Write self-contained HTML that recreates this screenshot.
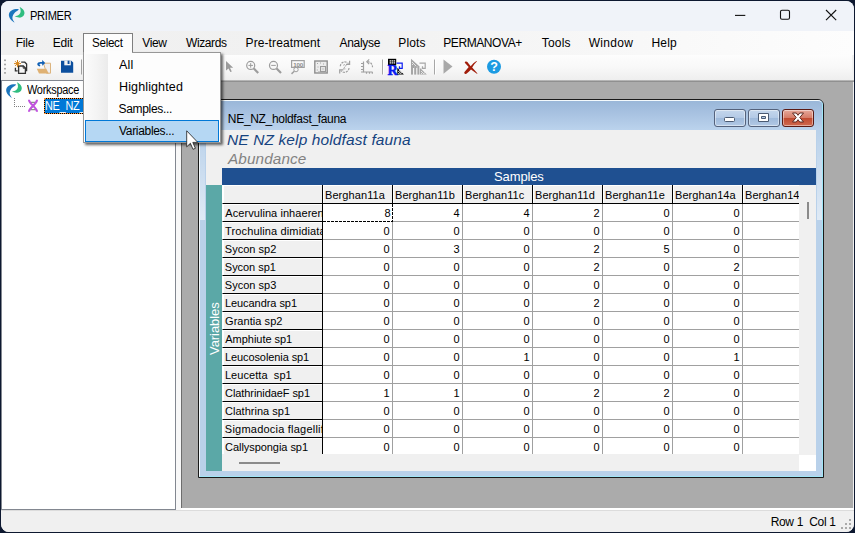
<!DOCTYPE html>
<html lang="en"><head><meta charset="utf-8"><title>PRIMER</title>
<style>
*{box-sizing:border-box;margin:0;padding:0}
html,body{width:855px;height:533px;overflow:hidden;background:#0d1830}
body{position:relative;font-family:"Liberation Sans",sans-serif;font-size:12px;color:#000}
.win,.win *{position:absolute}
.win{left:0;top:0;width:855px;height:533px;overflow:hidden}
.winbg{left:1px;top:1px;width:852.5px;height:530.5px;background:#f0f0f0;border-radius:8px}
.title{left:1px;top:1px;width:852.5px;height:30px;background:#f0f3f9;border-radius:8px 8px 0 0}
.t{white-space:nowrap;line-height:16px;height:16px}
.menubar{left:1px;top:31px;width:852.5px;height:24px;background:linear-gradient(90deg,#f0f0f0 0%,#f1f1f1 40%,#fdfdfd 100%)}
.toolbar{left:1px;top:55px;width:851px;height:25px;background:linear-gradient(180deg,#fdfdfd 0%,#f8f8f8 50%,#eeeeee 100%);border-radius:0 0 3px 0}
.tbline{left:1px;top:80px;width:852.5px;height:2px;background:linear-gradient(180deg,#c2c2c2,#8f8f8f)}
.tree{left:1px;top:80px;width:175px;height:429.500px;background:#fff;border:1px solid #828790}
.split{left:176px;top:82px;width:5px;height:428px;background:#f8f8f8}
.mdi{left:181px;top:81px;width:671.500px;height:427px;background:#ababab;border-left:1px solid #6d6d6d;border-top:1px solid #909090}
.stline{left:181px;top:508px;width:672.500px;height:2px;background:#fff}
.status{left:1px;top:510px;width:852.5px;height:21.500px;background:#f0f0f0;border-top:1px solid #dcdcdc;border-radius:0 0 8px 8px}
.dot{width:2px;height:2px;background:#a9a9a9}
/* child window */
.cw{left:198px;top:99px;width:626px;height:379px;background:#b9d1ea;border:1px solid #1a1a1a;border-radius:6px 6px 0 0;overflow:hidden}
.cwt{left:0;top:0;width:100%;height:30px;background:linear-gradient(180deg,#99b6d8 0%,#a8c2e1 45%,#bbd3ed 100%)}
.cwin{left:0;top:0;right:0;bottom:0;border:1px solid #f4fafd;border-right-color:#9fe6f7;border-bottom-color:#9fe6f7;border-radius:5px 5px 0 0}
.client{left:206px;top:130px;width:610px;height:341px;background:#f0f0f0}
.sbar{left:16px;top:38px;width:594px;height:17px;background:#1f5091;color:#fff}
.vbar{left:0;top:55px;width:16px;height:286px;background:#5ba8a7}
.grid{left:16px;top:55px;width:577px;height:269px;overflow:hidden;background:#fff}
.hc{top:0;height:19px;background:#f0f0f0;border-right:1px solid #000;border-bottom:1px solid #000;box-shadow:inset 1px 1px 0 #fff}
.hc span{left:2.000px;top:1.900px;white-space:nowrap;line-height:16px;font-size:11px;letter-spacing:0.080px}
.rl{left:0;width:101px;height:18px;background:#f0f0f0;border-left:1px solid #fff;border-right:1px solid #000;border-bottom:1px solid #000;overflow:hidden;box-shadow:inset 1px 1px 0 #fff}
.rl span{left:2.3px;top:1.100px;white-space:nowrap;line-height:16px;font-size:11px;letter-spacing:0.200px}
.dc{width:70px;height:18px;border-right:1px solid #a0a0a0;border-bottom:1px solid #a0a0a0;background:#fff}
.dc span{right:2.400px;top:1.100px;white-space:nowrap;line-height:16px;font-size:11px}
.dc.sel{border-right:none;border-bottom:none;background:repeating-linear-gradient(90deg,#000 0 3px,transparent 3px 4px) 0 100%/100% 1px no-repeat,repeating-linear-gradient(180deg,#000 0 3px,transparent 3px 4px) 100% 0/1px 100% no-repeat,#fff}
.corner{left:0;top:0;width:101px;height:19px;background:#f0f0f0;border-left:1px solid #fff;border-right:1px solid #000;border-bottom:1px solid #000;box-shadow:inset 1px 1px 0 #fff}
/* buttons */
.cb{top:109px;width:32px;height:18px;border:1px solid #54627c;border-radius:3px;background:linear-gradient(180deg,#c4d6ec 0%,#b4cae6 48%,#9fbadb 52%,#b2c9e5 100%);box-shadow:inset 0 0 0 1px rgba(255,255,255,.45)}
.cb.x{border-color:#5a1a14;background:linear-gradient(180deg,#e6a99b 0%,#d67c68 48%,#c14a30 52%,#cf6a50 100%)}
/* dropdown */
.dd{left:83px;top:52px;width:138px;height:91px;background:#fdfdfd;border:1px solid #979797;box-shadow:2px 2px 2.500px rgba(0,0,0,.6)}
.ddg{left:1px;top:1px;width:23px;height:66px;background:linear-gradient(90deg,#fbfbfb,#f4f4f4 50%,#ebebeb)}
.hl{left:1px;top:67px;width:134px;height:22px;background:#b5d7f3;border:1px solid #0078d7}
.seltab{left:83px;top:33px;width:50px;height:21px;background:#fdfdfd;border:1px solid #7f7f7f;border-bottom:none}

#t_primer{letter-spacing:-0.300px;margin-left:-1.28px;transform:scaleX(0.9244);transform-origin:0 0;margin-top:-0.40px;}
#m0{letter-spacing:-0.254px;margin-left:-1.25px;margin-top:-0.30px;}
#m1{letter-spacing:-0.181px;margin-left:-0.25px;margin-top:-0.30px;}
#m2{letter-spacing:-0.300px;margin-left:-0.28px;transform:scaleX(0.9691);transform-origin:0 0;margin-top:-0.30px;}
#m3{letter-spacing:-0.359px;margin-left:0.25px;margin-top:-0.30px;}
#m4{letter-spacing:-0.381px;margin-left:-0.05px;margin-top:-0.30px;}
#m5{letter-spacing:0.098px;margin-left:-0.45px;margin-top:-0.30px;}
#m6{letter-spacing:-0.311px;margin-left:0.50px;margin-top:-0.30px;}
#m7{letter-spacing:0.168px;margin-left:-0.75px;margin-top:-0.30px;}
#m8{letter-spacing:-0.421px;margin-left:-0.75px;margin-top:-0.30px;}
#m9{letter-spacing:0.209px;margin-left:-0.25px;margin-top:-0.30px;}
#m10{letter-spacing:0.287px;margin-left:0.75px;margin-top:-0.30px;}
#m11{letter-spacing:0.181px;margin-left:-0.55px;margin-top:-0.30px;}
#d0{letter-spacing:0.120px;margin-left:0.10px;transform:scaleX(1.0461);transform-origin:0 0;margin-top:0.00px;}
#d1{letter-spacing:0.120px;margin-left:-0.39px;transform:scaleX(1.0425);transform-origin:0 0;margin-top:0.00px;}
#d2{letter-spacing:-0.334px;margin-left:-0.40px;margin-top:0.00px;}
#d3{letter-spacing:-0.328px;margin-left:0.05px;margin-top:0.00px;}
#tw{letter-spacing:-0.300px;margin-left:-0.05px;transform:scaleX(0.9115);transform-origin:0 0;margin-top:-0.20px;}
#st{letter-spacing:-0.306px;margin-left:0.65px;margin-top:0.00px;}
#cwtitle{letter-spacing:-0.322px;margin-left:-0.15px;margin-top:-1.40px;}
#h1{letter-spacing:0.120px;margin-left:0.36px;transform:scaleX(1.0557);transform-origin:0 0;margin-top:-2.00px;}
#h2{letter-spacing:0.120px;margin-left:1.26px;transform:scaleX(1.0430);transform-origin:0 0;margin-top:-1.70px;}
#rl0{letter-spacing:0.063px;margin-left:0.00px;}
#rl1{letter-spacing:0.128px;margin-left:-0.20px;}
#rl2{letter-spacing:0.013px;margin-left:-0.45px;}
#rl3{letter-spacing:-0.050px;margin-left:-0.45px;}
#rl4{letter-spacing:0.007px;margin-left:-0.45px;}
#rl5{letter-spacing:-0.055px;margin-left:-0.40px;}
#rl6{letter-spacing:0.050px;margin-left:-0.25px;}
#rl7{letter-spacing:-0.031px;margin-left:0.00px;}
#rl8{letter-spacing:-0.087px;margin-left:-0.40px;}
#rl9{letter-spacing:0.064px;margin-left:-0.40px;}
#rl10{letter-spacing:-0.078px;margin-left:-0.25px;}
#rl11{letter-spacing:0.013px;margin-left:-0.25px;}
#rl12{letter-spacing:0.218px;margin-left:-0.45px;}
#rl13{letter-spacing:-0.054px;margin-left:-0.25px;}
#tn{letter-spacing:-0.300px;margin-left:-0.66px;transform:scaleX(0.9099);transform-origin:0 0;margin-top:-0.50px;}
#smp{letter-spacing:-0.144px;margin-left:0.09px;margin-top:0.80px;}
</style></head>
<body>
<div class="win">
  <div class="winbg"></div>
  <div class="title"></div>
  
  <span class="t" style="left:31px;top:8px" id="t_primer">PRIMER</span>
  <svg style="left:725px;top:0" width="128" height="31" viewBox="725 0 128 31"><g stroke="#111" stroke-width="1.100" fill="none"><path d="M735 15.400h10.300"/><rect x="780.500" y="10.300" width="9" height="9" rx="1.500"/><path d="M826 10l10.200 10.200M836.200 10l-10.200 10.200"/></g></svg>
  <div class="menubar"></div>
  <span class="t" style="left:17px;top:35px" id="m0">File</span>
  <span class="t" style="left:53px;top:35px" id="m1">Edit</span>
  <span class="t" style="left:142px;top:35px" id="m3">View</span>
  <span class="t" style="left:186px;top:35px" id="m4">Wizards</span>
  <span class="t" style="left:246px;top:35px" id="m5">Pre-treatment</span>
  <span class="t" style="left:339px;top:35px" id="m6">Analyse</span>
  <span class="t" style="left:399px;top:35px" id="m7">Plots</span>
  <span class="t" style="left:444px;top:35px" id="m8">PERMANOVA+</span>
  <span class="t" style="left:542px;top:35px" id="m9">Tools</span>
  <span class="t" style="left:588px;top:35px" id="m10">Window</span>
  <span class="t" style="left:652px;top:35px" id="m11">Help</span>
  <div class="toolbar"></div>
  <div class="tbline"></div>
  <svg style="left:0;top:55px" width="520" height="26" viewBox="0 55 520 26">
  <!-- grip -->
  <g fill="#a5a5a5"><rect x="4" y="59.500" width="2" height="1.600"/><rect x="4" y="63.700" width="2" height="1.600"/><rect x="4" y="67.900" width="2" height="1.600"/><rect x="4" y="72.100" width="2" height="1.600"/></g>
  <!-- new -->
  <g fill="none" stroke="#333" stroke-width="1.300" stroke-linejoin="miter">
    <path d="M21.200 62.200h3.600l1.800 1.800v6.600h-1.500"/>
    <path d="M15.400 67.800v3h2.200"/>
    <path d="M18.600 66h4.800l2 2v5.300h-6.800z" fill="#f6f6f6"/>
    <path d="M23.200 66v2.200h2.200" stroke-width="1"/>
  </g>
  <g stroke="#d9861a" stroke-width="1" stroke-linecap="butt"><path d="M17.500 60v7.200M14 63.600h7M15.100 61.200l4.800 4.800M19.900 61.200l-4.800 4.800"/></g>
  <!-- open -->
  <path d="M43.500 63.200h7v10h-4z" fill="#f0eeee" stroke="#dcb47e" stroke-width="1"/>
  <path d="M36.800 68.800h9.500l2.400 4.600h-9.700z" fill="#dfb173"/>
  <path d="M39.800 66.400c-1.800-.3-2.600-1.300-2.500-2.400.1-1.300 1.300-2 3.300-2h1.600v-1.900l3 2.800-3 2.800v-1.900h-1.600c-.9 0-1.200.2-1.200.5 0 .4.300.6 1 .7z" fill="#0f5fb5"/>
  <!-- save -->
  <path d="M61 60.700h10.300l1.900 1.900v10.200H61z" fill="#0c4f9e"/>
  <rect x="64.300" y="60.700" width="6.500" height="4.600" fill="#f3f3f3"/>
  <rect x="67.600" y="60.700" width="1.900" height="3.300" fill="#0c4f9e"/>
  <!-- sep0 (mostly hidden) -->
  <rect x="81" y="59.500" width="1" height="15" fill="#a0a0a0"/>
  <!-- pointer -->
  <path d="M226 61v9.600l2.500-2.200 1.800 3.700 1.500-.7-1.800-3.600h3.200z" fill="#9b9b9b"/>
  <!-- zoom in -->
  <g fill="none" stroke="#9c9c9c">
    <circle cx="250.700" cy="65.400" r="4" stroke-width="1.200"/>
    <path d="M253.800 68.500l4.400 4.500" stroke-width="2.200"/>
    <path d="M248.400 65.400h4.600M250.700 63.100v4.600" stroke-width="1"/>
    <circle cx="273.500" cy="65.400" r="4" stroke-width="1.200"/>
    <path d="M276.600 68.500l4.400 4.500" stroke-width="2.200"/>
    <path d="M271.200 65.400h4.600" stroke-width="1"/>
  </g>
  <!-- 100 -->
  <g fill="none" stroke="#a0a0a0">
    <rect x="291.600" y="60.600" width="12.600" height="6.800" stroke-width="1.200"/>
    <circle cx="296" cy="69.600" r="2.200" stroke-width="1"/>
    <path d="M294.300 71.300l-2.800 2.600" stroke-width="1.500"/>
  </g>
  <text x="293.200" y="66.500" font-family="Liberation Sans, sans-serif" font-size="6.200" font-weight="bold" fill="#8c8c8c" letter-spacing="-0.100" style="opacity:.99">100</text>
  <!-- dotted box -->
  <g>
    <rect x="314.800" y="61" width="12.400" height="12" fill="#ececec" stroke="#8f8f8f" stroke-width="1.400"/>
    <rect x="320.500" y="66.500" width="5" height="5" fill="#e4e4e4" stroke="#9a9a9a" stroke-width="1"/>
    <g fill="#a5a5a5"><rect x="317" y="63" width="1" height="1"/><rect x="320" y="62.500" width="1" height="1"/><rect x="323" y="63.500" width="1" height="1"/><rect x="317.500" y="66.500" width="1" height="1"/><rect x="316.800" y="69.500" width="1" height="1"/><rect x="318.500" y="71" width="1" height="1"/><rect x="322.500" y="68.500" width="1" height="1"/></g>
  </g>
  <!-- rotate -->
  <g fill="none" stroke="#a0a0a0" stroke-width="1.200">
    <path d="M340.300 66.200a4.600 4.600 0 0 1 8.200-2.600" stroke-dasharray="2.200 1"/>
    <path d="M349.600 60.800v3.600h-3.600"/>
    <path d="M349 68a4.600 4.600 0 0 1-8.200 2.600" stroke-dasharray="2.200 1"/>
    <path d="M339.700 73.400v-3.600h3.600"/>
    <path d="M343.300 65.300c.8-1 2.600-.8 2.600.4 0 1.200-2.400 1.600-2.600 3.200h2.800" stroke-width="1" stroke-dasharray="1.600 0.800"/>
  </g>
  <!-- axes -->
  <g fill="none" stroke="#a0a0a0" stroke-width="1.200">
    <path d="M363.500 61.500v10.500h9"/>
    <path d="M361 63.500h2.500M361 66.500h2.500M361 69.500h2.500M361 72h2.500M366.500 72v1.800M369.500 72v1.800M372.300 72v1.800"/>
    <path d="M367.500 61.700c3 0 5 2.500 5 5.500" stroke-dasharray="2.200 1"/>
    <path d="M369.200 59.300l-2.400 2.400 2.400 2.400"/>
  </g>
  <!-- sep1 -->
  <rect x="382" y="59.500" width="1" height="15" fill="#a7a7a7"/><rect x="383" y="59.500" width="1" height="15" fill="#fff"/>
  <!-- R icon -->
  <rect x="388" y="58.800" width="8.200" height="6.600" fill="#000"/>
  <g fill="#fff"><rect x="389.600" y="60.300" width="1.500" height="1.200"/><rect x="391.600" y="60.300" width="1.500" height="1.200"/><rect x="393.600" y="60.300" width="1.500" height="1.200"/><rect x="389.600" y="62.300" width="1.500" height="1.200"/><rect x="391.600" y="62.300" width="1.500" height="1.200"/><rect x="393.600" y="62.300" width="1.500" height="1.200"/></g>
  <path d="M396.500 63.200h5.700v5.200h-3.500M399.500 66.200v2.200" fill="none" stroke="#0a1cf0" stroke-width="1.200"/>
  <text x="387.600" y="74.600" font-family="Liberation Serif, serif" font-size="14" font-weight="bold" fill="#0a1cf0" stroke="#0a1cf0" stroke-width="0.500" textLength="10.400" lengthAdjust="spacingAndGlyphs">R</text>
  <path d="M397.300 67.800v6.800h6.600z" fill="#000"/>
  <g fill="#fff"><rect x="398.300" y="71" width="1" height="1"/><rect x="399.300" y="72" width="1" height="1"/><rect x="398.300" y="73" width="1" height="1"/><rect x="400.300" y="73" width="1" height="1"/><rect x="399.300" y="70" width="1" height="1"/><rect x="400.300" y="71" width="1" height="1"/><rect x="401.300" y="72" width="1" height="1"/></g>
  <!-- gray icon -->
  <g fill="#a6a6a6">
    <path d="M411 58.800v7.200h8z"/>
    <rect x="411" y="66" width="2" height="8.600"/><rect x="414.200" y="66" width="2" height="8.600"/><rect x="417.400" y="66" width="2" height="8.600"/>
    <rect x="413" y="66" width="1.200" height="2"/><rect x="416.200" y="66" width="1.200" height="2"/>
    <path d="M420 68v6.600h6.800z"/>
  </g>
  <path d="M419.500 63.200h5.700v5.200h-3.500M422.500 66.200v2.200" fill="none" stroke="#a6a6a6" stroke-width="1.200"/>
  <g fill="#e6e6e6"><rect x="412" y="62" width="1" height="1"/><rect x="413" y="63" width="1" height="1"/><rect x="412" y="64" width="1" height="1"/><rect x="414" y="64" width="1" height="1"/><rect x="415" y="65" width="1" height="1"/><rect x="421" y="71" width="1" height="1"/><rect x="422" y="72" width="1" height="1"/><rect x="421" y="73" width="1" height="1"/><rect x="423" y="73" width="1" height="1"/><rect x="424" y="72.500" width="1" height="1"/></g>
  <!-- sep2 -->
  <rect x="434" y="59.500" width="1" height="15" fill="#a7a7a7"/><rect x="435" y="59.500" width="1" height="15" fill="#fff"/>
  <!-- play -->
  <path d="M443.500 59.500l9 7-9 7.200z" fill="#a9a9a9"/>
  <!-- red x -->
  <path d="M465.200 61.800c.8-.6 1.700-.4 2.200.300l3.300 4.100c1.700-2 3.500-3.700 5.700-5.100.4-.2.700.1.400.5-1.800 1.800-3.300 3.800-4.600 6l5.100 5.600c.3.400 0 .7-.4.500l-5.900-4.200c-1.500 1.600-2.900 3.100-4.600 4.200-1.300.8-2.800-.4-1.900-1.700l4.200-5.100-3.700-4c-.4-.4-.3-.8.200-1.100z" fill="#a11d0a"/>
  <!-- help -->
  <circle cx="494" cy="66.800" r="7" fill="#1c9be2"/>
  <text x="494" y="71.300" text-anchor="middle" font-family="Liberation Sans, sans-serif" font-size="12.500" font-weight="bold" fill="#fff">?</text>
</svg>

  <div class="tree"></div>
  <svg style="left:0;top:0" width="40" height="120" viewBox="0 0 40 120"><g><path d="M18.800 9.200C14.500 8.600 9 10.500 8.850 14.800c-.05 3.200 2.650 6.200 5.750 7.800-1.600-2.100-2.600-3.800-2.100-5.800.5-2.600 2.300-4.600 4.500-5.800.8-.6 1.500-1.100 1.800-1.800Z" fill="#1b75bd"/><path d="M19.600 7c2.900 1.200 5.400 3.800 4.800 6.800-.6 2.800-2.900 4.100-5.400 3.800-1.700-.2-3.200-.6-4.400-1.300 1.900-.1 3.400-.7 4.600-1.700 2-1.800 1.800-4.800.4-7.600Z" fill="#2fbd80"/></g><g transform="translate(-2.700 75.200)"><path d="M18.800 9.200C14.500 8.600 9 10.500 8.850 14.800c-.05 3.200 2.650 6.200 5.750 7.800-1.600-2.100-2.600-3.800-2.100-5.800.5-2.600 2.300-4.600 4.500-5.800.8-.6 1.500-1.100 1.800-1.800Z" fill="#1b75bd"/><path d="M19.600 7c2.900 1.200 5.400 3.800 4.800 6.800-.6 2.800-2.900 4.100-5.400 3.800-1.700-.2-3.200-.6-4.400-1.300 1.900-.1 3.400-.7 4.600-1.700 2-1.800 1.800-4.800.4-7.600Z" fill="#2fbd80"/></g></svg>
  <svg style="left:0;top:95px" width="60" height="22" viewBox="0 95 60 22">
  <path d="M14.500 98v8.500" stroke="#808080" stroke-width="1" stroke-dasharray="1 1" fill="none"/>
  <path d="M14 106.500h11" stroke="#808080" stroke-width="1" stroke-dasharray="1 1" fill="none"/>
  <g fill="none" stroke="#8f8f8f" stroke-width="1.300"><path d="M30 102.400h6.200L30.200 109.600h6"/></g>
  <g fill="none" stroke="#c152df" stroke-width="2.100"><path d="M29 99.800c0 4.700 8 7.200 8 12M37 99.800c0 4.700-8 7.200-8 12"/></g>
</svg>
  <span class="t" style="left:27px;top:82px" id="tw">Workspace</span>
  <div style="left:44px;top:98px;width:60px;height:16px;background:#0078d7;border:1px solid #000"></div><div style="left:44px;top:98px;width:60px;height:16px;border:1px dotted #ff9030"></div>
  <span class="t" style="left:46px;top:98px;color:#fff" id="tn">NE_NZ_</span>
  <div class="split"></div>
  <div class="mdi"></div>
  <div class="stline"></div>
  <div class="status"></div>
  <span class="t" style="left:770px;top:514px" id="st">Row 1&nbsp; Col 1</span>
  <i class="dot" style="left:849px;top:519px"></i>
  <i class="dot" style="left:845px;top:523px"></i><i class="dot" style="left:849px;top:523px"></i>
  <i class="dot" style="left:841px;top:527px"></i><i class="dot" style="left:845px;top:527px"></i><i class="dot" style="left:849px;top:527px"></i>
  <div class="cw">
    <div class="cwt"></div>
    <div class="cwin"></div>
  </div>
  <div style="left:200px;top:130px;width:5px;height:90px;background:linear-gradient(180deg,rgba(255,255,255,0),rgba(255,255,255,.55))"></div>
  <div style="left:817px;top:130px;width:5px;height:90px;background:linear-gradient(180deg,rgba(255,255,255,0),rgba(255,255,255,.55))"></div>
  <span class="t" style="left:228px;top:112px" id="cwtitle">NE_NZ_holdfast_fauna</span>
  <div class="cb" style="left:714px"></div>
  <div class="cb" style="left:748px"></div>
  <div class="cb x" style="left:782px"></div>
  <svg style="left:714px;top:108px" width="102" height="20" viewBox="714 108 102 20">
  <rect x="724.500" y="117.500" width="10" height="4" rx="1" fill="#fff" stroke="#4a5a72" stroke-width="1"/>
  <path d="M758.500 113.500h10v8h-10zM761.500 116.500v2h4v-2z" fill="#fff" fill-rule="evenodd" stroke="#4a5a72" stroke-width="1"/>
  <path d="M792.500 113h3.800l1.700 2.300 1.700-2.300h3.800l-3.700 4.500 3.700 4.500h-3.800l-1.700-2.300-1.700 2.300h-3.800l3.700-4.500z" fill="#fff" stroke="#5e2a22" stroke-width="1" stroke-linejoin="round"/>
</svg>
  <div class="client">
    <span class="t" style="left:21px;top:2px;font-size:14.670px;font-style:italic;color:#15437f;line-height:20px;height:20px" id="h1">NE NZ kelp holdfast fauna</span>
    <span class="t" style="left:21px;top:21px;font-size:14.670px;font-style:italic;color:#828282;line-height:20px;height:20px" id="h2">Abundance</span>
    <div class="sbar"><span class="t" style="left:272px;top:0;font-size:13px;color:#fff" id="smp">Samples</span></div>
    <div class="vbar"></div>
    <div style="left:593px;top:325px;width:17px;height:16px;background:#fff"></div>
    <div style="left:601px;top:72px;width:2px;height:17px;background:#8b8b8b"></div>
    <div style="left:33px;top:332px;width:41px;height:2px;background:#8b8b8b"></div>
    <div class="grid">
      <div class="corner"></div>
      <div class="hc" style="left:101px;width:70px"><span id="hc0">Berghan11a</span></div>
<div class="hc" style="left:171px;width:70px"><span id="hc1">Berghan11b</span></div>
<div class="hc" style="left:241px;width:70px"><span id="hc2">Berghan11c</span></div>
<div class="hc" style="left:311px;width:70px"><span id="hc3">Berghan11d</span></div>
<div class="hc" style="left:381px;width:70px"><span id="hc4">Berghan11e</span></div>
<div class="hc" style="left:451px;width:70px"><span id="hc5">Berghan14a</span></div>
<div class="hc" style="left:521px;width:70px"><span id="hc6">Berghan14</span></div>
<div class="rl" style="top:19px"><span id="rl0">Acervulina inhaeren</span></div>
<div class="dc sel" style="top:19px;left:101px"><span>8</span></div>
<div class="dc" style="top:19px;left:171px"><span>4</span></div>
<div class="dc" style="top:19px;left:241px"><span>4</span></div>
<div class="dc" style="top:19px;left:311px"><span>2</span></div>
<div class="dc" style="top:19px;left:381px"><span>0</span></div>
<div class="dc" style="top:19px;left:451px"><span>0</span></div>
<div class="dc" style="top:19px;left:521px"></div>
<div class="rl" style="top:37px"><span id="rl1">Trochulina dimidiata</span></div>
<div class="dc" style="top:37px;left:101px"><span>0</span></div>
<div class="dc" style="top:37px;left:171px"><span>0</span></div>
<div class="dc" style="top:37px;left:241px"><span>0</span></div>
<div class="dc" style="top:37px;left:311px"><span>0</span></div>
<div class="dc" style="top:37px;left:381px"><span>0</span></div>
<div class="dc" style="top:37px;left:451px"><span>0</span></div>
<div class="dc" style="top:37px;left:521px"></div>
<div class="rl" style="top:55px"><span id="rl2">Sycon sp2</span></div>
<div class="dc" style="top:55px;left:101px"><span>0</span></div>
<div class="dc" style="top:55px;left:171px"><span>3</span></div>
<div class="dc" style="top:55px;left:241px"><span>0</span></div>
<div class="dc" style="top:55px;left:311px"><span>2</span></div>
<div class="dc" style="top:55px;left:381px"><span>5</span></div>
<div class="dc" style="top:55px;left:451px"><span>0</span></div>
<div class="dc" style="top:55px;left:521px"></div>
<div class="rl" style="top:73px"><span id="rl3">Sycon sp1</span></div>
<div class="dc" style="top:73px;left:101px"><span>0</span></div>
<div class="dc" style="top:73px;left:171px"><span>0</span></div>
<div class="dc" style="top:73px;left:241px"><span>0</span></div>
<div class="dc" style="top:73px;left:311px"><span>2</span></div>
<div class="dc" style="top:73px;left:381px"><span>0</span></div>
<div class="dc" style="top:73px;left:451px"><span>2</span></div>
<div class="dc" style="top:73px;left:521px"></div>
<div class="rl" style="top:91px"><span id="rl4">Sycon sp3</span></div>
<div class="dc" style="top:91px;left:101px"><span>0</span></div>
<div class="dc" style="top:91px;left:171px"><span>0</span></div>
<div class="dc" style="top:91px;left:241px"><span>0</span></div>
<div class="dc" style="top:91px;left:311px"><span>0</span></div>
<div class="dc" style="top:91px;left:381px"><span>0</span></div>
<div class="dc" style="top:91px;left:451px"><span>0</span></div>
<div class="dc" style="top:91px;left:521px"></div>
<div class="rl" style="top:109px"><span id="rl5">Leucandra sp1</span></div>
<div class="dc" style="top:109px;left:101px"><span>0</span></div>
<div class="dc" style="top:109px;left:171px"><span>0</span></div>
<div class="dc" style="top:109px;left:241px"><span>0</span></div>
<div class="dc" style="top:109px;left:311px"><span>2</span></div>
<div class="dc" style="top:109px;left:381px"><span>0</span></div>
<div class="dc" style="top:109px;left:451px"><span>0</span></div>
<div class="dc" style="top:109px;left:521px"></div>
<div class="rl" style="top:127px"><span id="rl6">Grantia sp2</span></div>
<div class="dc" style="top:127px;left:101px"><span>0</span></div>
<div class="dc" style="top:127px;left:171px"><span>0</span></div>
<div class="dc" style="top:127px;left:241px"><span>0</span></div>
<div class="dc" style="top:127px;left:311px"><span>0</span></div>
<div class="dc" style="top:127px;left:381px"><span>0</span></div>
<div class="dc" style="top:127px;left:451px"><span>0</span></div>
<div class="dc" style="top:127px;left:521px"></div>
<div class="rl" style="top:145px"><span id="rl7">Amphiute sp1</span></div>
<div class="dc" style="top:145px;left:101px"><span>0</span></div>
<div class="dc" style="top:145px;left:171px"><span>0</span></div>
<div class="dc" style="top:145px;left:241px"><span>0</span></div>
<div class="dc" style="top:145px;left:311px"><span>0</span></div>
<div class="dc" style="top:145px;left:381px"><span>0</span></div>
<div class="dc" style="top:145px;left:451px"><span>0</span></div>
<div class="dc" style="top:145px;left:521px"></div>
<div class="rl" style="top:163px"><span id="rl8">Leucosolenia sp1</span></div>
<div class="dc" style="top:163px;left:101px"><span>0</span></div>
<div class="dc" style="top:163px;left:171px"><span>0</span></div>
<div class="dc" style="top:163px;left:241px"><span>1</span></div>
<div class="dc" style="top:163px;left:311px"><span>0</span></div>
<div class="dc" style="top:163px;left:381px"><span>0</span></div>
<div class="dc" style="top:163px;left:451px"><span>1</span></div>
<div class="dc" style="top:163px;left:521px"></div>
<div class="rl" style="top:181px"><span id="rl9">Leucetta&nbsp; sp1</span></div>
<div class="dc" style="top:181px;left:101px"><span>0</span></div>
<div class="dc" style="top:181px;left:171px"><span>0</span></div>
<div class="dc" style="top:181px;left:241px"><span>0</span></div>
<div class="dc" style="top:181px;left:311px"><span>0</span></div>
<div class="dc" style="top:181px;left:381px"><span>0</span></div>
<div class="dc" style="top:181px;left:451px"><span>0</span></div>
<div class="dc" style="top:181px;left:521px"></div>
<div class="rl" style="top:199px"><span id="rl10">ClathrinidaeF sp1</span></div>
<div class="dc" style="top:199px;left:101px"><span>1</span></div>
<div class="dc" style="top:199px;left:171px"><span>1</span></div>
<div class="dc" style="top:199px;left:241px"><span>0</span></div>
<div class="dc" style="top:199px;left:311px"><span>2</span></div>
<div class="dc" style="top:199px;left:381px"><span>2</span></div>
<div class="dc" style="top:199px;left:451px"><span>0</span></div>
<div class="dc" style="top:199px;left:521px"></div>
<div class="rl" style="top:217px"><span id="rl11">Clathrina sp1</span></div>
<div class="dc" style="top:217px;left:101px"><span>0</span></div>
<div class="dc" style="top:217px;left:171px"><span>0</span></div>
<div class="dc" style="top:217px;left:241px"><span>0</span></div>
<div class="dc" style="top:217px;left:311px"><span>0</span></div>
<div class="dc" style="top:217px;left:381px"><span>0</span></div>
<div class="dc" style="top:217px;left:451px"><span>0</span></div>
<div class="dc" style="top:217px;left:521px"></div>
<div class="rl" style="top:235px"><span id="rl12">Sigmadocia flagellif</span></div>
<div class="dc" style="top:235px;left:101px"><span>0</span></div>
<div class="dc" style="top:235px;left:171px"><span>0</span></div>
<div class="dc" style="top:235px;left:241px"><span>0</span></div>
<div class="dc" style="top:235px;left:311px"><span>0</span></div>
<div class="dc" style="top:235px;left:381px"><span>0</span></div>
<div class="dc" style="top:235px;left:451px"><span>0</span></div>
<div class="dc" style="top:235px;left:521px"></div>
<div class="rl" style="top:253px"><span id="rl13">Callyspongia sp1</span></div>
<div class="dc" style="top:253px;left:101px"><span>0</span></div>
<div class="dc" style="top:253px;left:171px"><span>0</span></div>
<div class="dc" style="top:253px;left:241px"><span>0</span></div>
<div class="dc" style="top:253px;left:311px"><span>0</span></div>
<div class="dc" style="top:253px;left:381px"><span>0</span></div>
<div class="dc" style="top:253px;left:451px"><span>0</span></div>
<div class="dc" style="top:253px;left:521px"></div>
    </div>
  </div>
  <span class="t" style="left:206.600px;top:355.400px;font-size:13px;color:#fff;transform:rotate(-90deg);transform-origin:0 0;letter-spacing:-0.060px" id="var">Variables</span>
  <div class="seltab"></div>
  <div class="dd">
    <div class="ddg"></div>
    <div class="hl"></div>
  </div>
  <div style="left:84px;top:51px;width:48px;height:2px;background:#fdfdfd"></div>
  <span class="t" style="left:92px;top:35px" id="m2">Select</span>
  <span class="t" style="left:119px;top:57px" id="d0">All</span>
  <span class="t" style="left:119px;top:79px" id="d1">Highlighted</span>
  <span class="t" style="left:119px;top:101px" id="d2">Samples...</span>
  <span class="t" style="left:119px;top:123px" id="d3">Variables...</span>
  <svg style="left:185.500px;top:130px" width="14" height="22" viewBox="0 0 14 22"><path d="M0.700 0.800V16.800L4.400 13.300L7 19.300L9.400 18.300L6.800 12.400H11.800Z" fill="#fff" stroke="#1a1a1a" stroke-width="0.800"/></svg>
</div>

</body></html>
